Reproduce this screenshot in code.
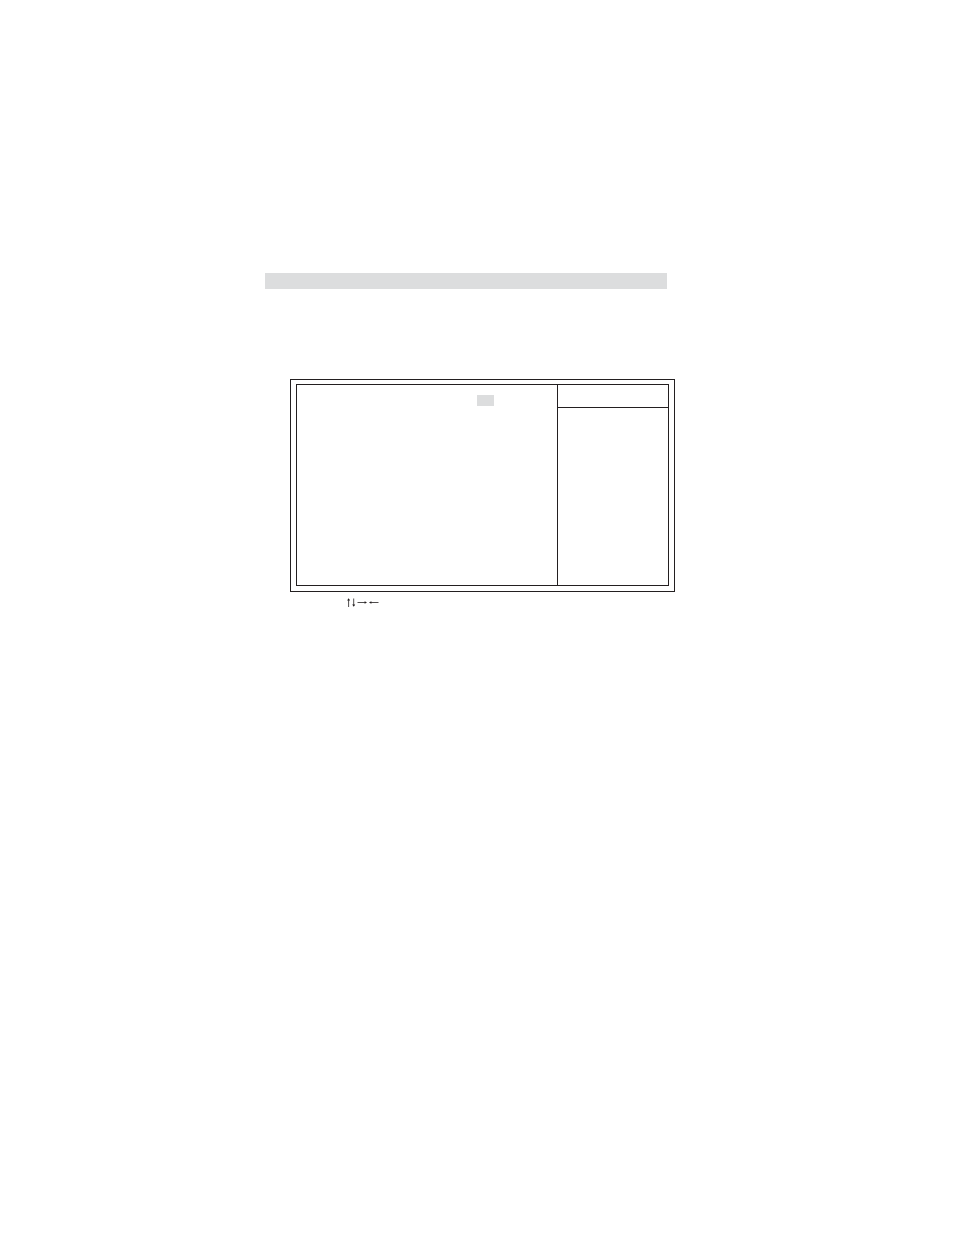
<main class="page">
  <header class="title-bar"></header>
  <section class="screen" aria-label="Setup screen">
    <div class="frame">
      <div class="settings">
        <span class="field"></span>
      </div>
      <aside class="help">
        <div class="help-title"></div>
      </aside>
    </div>
  </section>
  <footer class="keys">
    <svg width="34" height="10" viewBox="0 0 34 10" role="img" aria-label="Arrow keys">
      <g fill="none" stroke="#231f20" stroke-width="0.8">
        <path d="M3.6 1V9M8.7 0.5V8M12.5 4.5H21M25 4.5H33.5" />
      </g>
      <g fill="#231f20">
        <path d="M3.6 0.2L5.1 2.4H2.1ZM8.7 8.8L7.2 6.6H10.2ZM22 4.5L19.6 5.8V3.2ZM24 4.5L26.4 5.8V3.2Z" />
      </g>
    </svg>
  </footer>
</main>

<style>
  :global(body) {
    margin: 0;
    background: #fff;
    font-family: "Liberation Sans", Arial, sans-serif;
  }

  .page {
    display: flex;
    flex-direction: column;
    padding: 273px 279px 0 265px;
  }

  .title-bar {
    height: 16px;
    margin-right: 8px;
    background: #dcddde;
  }

  .screen {
    margin: 90px 0 0 25px;
    padding: 4px 5px 5px;
    border: 1px solid #231f20;
  }

  .frame {
    display: grid;
    grid-template-columns: 1fr 111px;
    min-height: 200px;
    border: 1px solid #231f20;
  }

  .settings {
    display: flex;
    justify-content: flex-end;
    align-items: flex-start;
    padding: 10px 63px 0 0;
  }

  .field {
    width: 17px;
    height: 11px;
    background: #dcddde;
  }

  .help {
    border-left: 1px solid #231f20;
  }

  .help-title {
    height: 22px;
    border-bottom: 1px solid #231f20;
  }

  .keys {
    display: flex;
    padding: 6px 0 0 80px;
  }
</style>
